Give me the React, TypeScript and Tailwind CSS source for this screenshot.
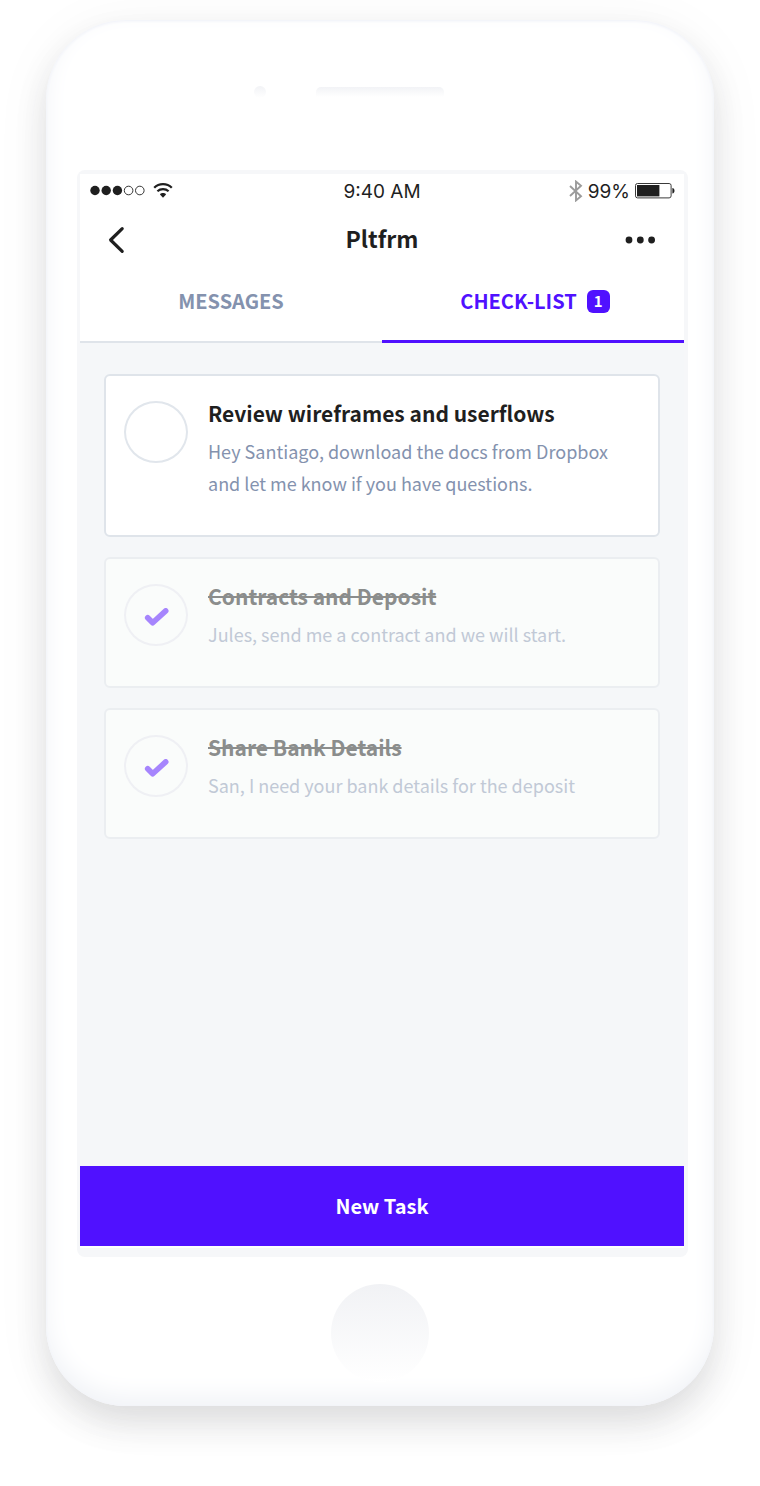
import { useState } from "react";

type Task = { id: string; title: string; note: string; done: boolean };

const initialTasks: Task[] = [
  {
    id: "wireframes",
    title: "Review wireframes and userflows",
    note: "Hey Santiago, download the docs from Dropbox and let me know if you have questions.",
    done: false,
  },
  {
    id: "contracts",
    title: "Contracts and Deposit",
    note: "Jules, send me a contract and we will start.",
    done: true,
  },
  {
    id: "bank",
    title: "Share Bank Details",
    note: "San, I need your bank details for the deposit",
    done: true,
  },
];

function StatusBar() {
  return (
    <div className="grid h-[34px] grid-cols-[1fr_auto_1fr] items-center px-[9px] font-['Inter',sans-serif] text-[19px] text-[#1f1f1f]">
      <div className="flex items-center gap-2">
        <svg width="56" height="12" viewBox="0 0 56 12" aria-hidden="true">
          <circle cx="6" cy="5.500" r="4.700" fill="#1f1f1f" />
          <circle cx="17.200" cy="5.500" r="4.700" fill="#1f1f1f" />
          <circle cx="28.400" cy="5.500" r="4.700" fill="#1f1f1f" />
          <circle cx="39.600" cy="5.500" r="4.300" fill="none" stroke="#1f1f1f" strokeWidth="0.900" />
          <circle cx="50.800" cy="5.500" r="4.300" fill="none" stroke="#1f1f1f" strokeWidth="0.900" />
        </svg>
        <svg width="20" height="16" viewBox="0 0 20 16" fill="none" stroke="#1f1f1f" aria-hidden="true">
          <path d="M1.200 4.700C6 0 14 0 18.800 4.700" strokeWidth="2.300" />
          <path d="M4.400 8.300c3.200-2.900 8-2.900 11.200 0" strokeWidth="2.200" />
          <path d="M10 14.800 7 11.600c.3-2 5.700-2 6 0z" fill="#1f1f1f" stroke="none" />
        </svg>
      </div>
      <span className="pt-[2px]">9:40 AM</span>
      <div className="flex items-center justify-end gap-[5px]">
        <svg width="14" height="22" viewBox="0 0 14 22" fill="none" stroke="#9b9b9b" strokeWidth="1.900" aria-hidden="true">
          <path d="M1 6l11 10.200L7 20.400V1.600l5 4.200L1 16" />
        </svg>
        <span className="pt-[2px]">99%</span>
        <svg width="40" height="16" viewBox="0 0 40 16" aria-hidden="true">
          <rect x="0.500" y="0.500" width="35.600" height="14.400" rx="2" fill="none" stroke="#3a3a3a" strokeWidth="1" />
          <rect x="2" y="2" width="22.400" height="11.400" fill="#1f1f1f" />
          <path d="M37.400 5c2.800.4 2.800 5.200 0 5.600z" fill="#1f1f1f" />
        </svg>
      </div>
    </div>
  );
}

function TaskCard({ task, onToggle }: { task: Task; onToggle: () => void }) {
  return (
    <li
      className={
        task.done
          ? "flex gap-5 rounded-[6px] border-2 border-[#ebeef1] bg-[#fafcfb] px-[18px] pt-[21px] pb-9"
          : "flex gap-5 rounded-[6px] border-2 border-[#dfe4ea] bg-white px-[18px] pt-[21px] pb-9"
      }
    >
      <div className="relative mt-1 h-[62px] w-16 shrink-0">
        <input
          id={task.id}
          type="checkbox"
          checked={task.done}
          onChange={onToggle}
          className={
            task.done
              ? "block h-full w-full cursor-pointer appearance-none rounded-[50%] border-2 border-[#eff0f4]"
              : "block h-full w-full cursor-pointer appearance-none rounded-[50%] border-2 border-[#e1e6ec]"
          }
        />
        {task.done && (
          <svg
            className="pointer-events-none absolute top-6 left-5"
            width="26"
            height="20"
            viewBox="0 0 26 20"
            fill="none"
            stroke="#a685fd"
            strokeWidth="5.600"
            strokeLinecap="round"
            strokeLinejoin="round"
            aria-hidden="true"
          >
            <path d="M3.700 9.700l5 5.100L21.700 2.900" />
          </svg>
        )}
      </div>
      <div className="min-w-0 flex-1">
        <label
          htmlFor={task.id}
          className={
            task.done
              ? "block cursor-pointer text-[21px] leading-8 font-bold text-[#8b8d8c] line-through decoration-2"
              : "block cursor-pointer text-[21px] leading-8 font-bold text-[#1f1f1f]"
          }
        >
          {task.title}
        </label>
        <p
          className={
            task.done
              ? "mt-[6px] text-[18px] leading-8 text-[#c1c9d6]"
              : "mt-[6px] text-[18px] leading-8 text-[#8492ae]"
          }
        >
          {task.note}
        </p>
      </div>
    </li>
  );
}

export default function App() {
  const [tasks, setTasks] = useState(initialTasks);
  const open = tasks.filter((t) => !t.done).length;
  const toggle = (id: string) =>
    setTasks((list) => list.map((t) => (t.id === id ? { ...t, done: !t.done } : t)));

  return (
    <main className="flex min-h-screen justify-center overflow-hidden bg-white px-[46px] pt-5 pb-20 font-['Noto_Sans_CJK_SC',sans-serif]">
      <div className="flex w-full max-w-[668px] flex-col rounded-[80px] bg-white pr-[26px] pb-6 pl-[31px] shadow-[0_18px_32px_rgba(40,44,50,0.12),0_8px_60px_rgba(0,0,0,0.05),inset_0_1px_3px_#eff1f8,inset_0_-10px_24px_#f1f3f7]">
        <div className="grid h-[150px] grid-cols-[1fr_auto_1fr] items-center pr-[5px] pb-[6px]">
          <div className="mr-[50px] h-3 w-3 justify-self-end rounded-full bg-linear-to-b from-[#f2f3f6] to-white" />
          <div className="h-[10px] w-32 rounded-t-[5px] bg-linear-to-b from-[#f2f3f6] to-white" />
        </div>

        <div className="flex flex-1 flex-col rounded-[8px] bg-[#f6f7f9] pt-1 pr-1 pb-[9px] pl-[3px]">
          <header className="bg-white">
            <StatusBar />
            <div className="grid h-16 grid-cols-[1fr_auto_1fr] items-center px-7">
              <button type="button" aria-label="Back" className="cursor-pointer justify-self-start">
                <svg width="18" height="28" viewBox="0 0 18 28" fill="none" stroke="#1f1f1f" strokeWidth="3.200" strokeLinecap="round" strokeLinejoin="round" aria-hidden="true">
                  <path d="M14.200 2.700L2.600 14l11.600 11.300" />
                </svg>
              </button>
              <h1 className="pb-1 text-[23px] leading-8 font-bold text-[#1f1f1f]">Pltfrm</h1>
              <button type="button" aria-label="More" className="cursor-pointer justify-self-end">
                <svg width="32" height="10" viewBox="0 0 32 10" fill="#1f1f1f" aria-hidden="true">
                  <circle cx="5" cy="5" r="3.400" />
                  <circle cx="16.300" cy="5" r="3.400" />
                  <circle cx="27.600" cy="5" r="3.400" />
                </svg>
              </button>
            </div>
            <nav className="grid h-[71px] grid-cols-2 text-[20px] leading-8 font-bold">
              <a href="#messages" className="flex items-center justify-center border-b-2 border-[#dfe4ea] pb-3 text-[#8492ae]">
                MESSAGES
              </a>
              <a href="#check-list" aria-current="page" className="flex items-center justify-center gap-[10px] border-b-[3px] border-[#5011ff] pb-[10px] pl-1 text-[#5011ff]">
                CHECK-LIST
                <span className="flex h-[23px] w-[23px] items-center justify-center rounded-[6px] bg-[#5011ff] pb-[2px] text-[15px] leading-none text-white">
                  {open}
                </span>
              </a>
            </nav>
          </header>

          <section className="flex-1 bg-[#f5f7f9] px-6 py-[31px]">
            <ul className="flex flex-col gap-5">
              {tasks.map((t) => (
                <TaskCard key={t.id} task={t} onToggle={() => toggle(t.id)} />
              ))}
            </ul>
          </section>

          <button type="button" className="h-20 cursor-pointer bg-[#5011ff] text-[20px] leading-8 font-bold text-white">
            New Task
          </button>
          <div className="h-[2px] bg-white" />
        </div>

        <div className="flex justify-center pt-[27px] pr-[5px]">
          <button type="button" aria-label="Home" className="h-[98px] w-[98px] cursor-pointer rounded-full bg-linear-to-b from-[#f1f2f5] to-white" />
        </div>
      </div>
    </main>
  );
}
